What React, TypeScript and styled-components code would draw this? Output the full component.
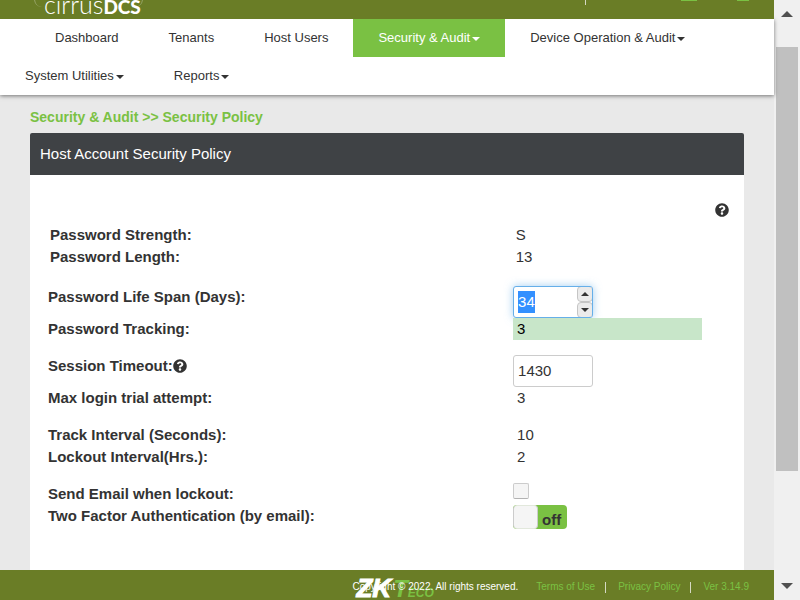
import React, { useEffect, useRef, useState } from "react";
import styled, { createGlobalStyle, css } from "styled-components";
import { FaQuestionCircle } from "react-icons/fa";

const colors = {
  olive: "#6a7d26",
  green: "#7ac143",
  ink: "#333333",
  slate: "#3f4245",
  page: "#e9e9e9",
  border: "#cccccc",
};

const GlobalStyle = createGlobalStyle`
  * { box-sizing: border-box; }
  body {
    margin: 0;
    overflow: hidden;
    background: ${colors.page};
    color: ${colors.ink};
    font-family: "Liberation Sans", Arial, sans-serif;
    font-size: 15px;
    line-height: 22px;
  }
  button, input { font: inherit; color: inherit; }
  ::selection { background: #3390ff; color: #ffffff; }
`;

const Shell = styled.div`
  display: grid;
  grid-template-columns: minmax(0, 1fr) 26px;
  height: 100vh;
`;

const Page = styled.div`
  display: flex;
  flex-direction: column;
  min-height: 0;
`;

const Banner = styled.header`
  position: relative;
  z-index: 1;
  display: flex;
  justify-content: space-between;
  align-items: flex-start;
  height: 19px;
  padding: 0 25px 0 34px;
  overflow: hidden;
  background: ${colors.olive};
`;

const Brand = styled.a`
  display: flex;
  align-self: flex-end;
  align-items: baseline;
  height: 32px;
  margin-bottom: 12px;
  padding: 0 1px 0 9px;
  border: solid rgba(255, 255, 255, 0.3);
  border-width: 0 1px;
  border-radius: 8px;
  color: #ffffff;
  font-family: Lato, sans-serif;
  font-size: 25px;
  font-weight: 300;
  line-height: 58px;
  text-decoration: none;

  strong {
    font-size: 19px;
    font-weight: 900;
  }
`;

const BannerTools = styled.div`
  display: flex;
  align-items: flex-start;
`;

const BannerRule = styled.span`
  width: 1px;
  height: 5px;
  margin-right: 95px;
  background: #d5d9c4;
`;

const BannerMark = styled.span<{ $wide?: boolean }>`
  width: ${(p) => (p.$wide ? 16 : 12)}px;
  height: 1px;
  margin-right: ${(p) => (p.$wide ? 40 : 0)}px;
  background: ${colors.green};
`;

const Nav = styled.nav`
  position: relative;
  background: #ffffff;
  box-shadow: 0 1px 4px rgba(0, 0, 0, 0.5);
`;

const NavList = styled.ul`
  display: flex;
  flex-wrap: wrap;
  margin: 0;
  padding: 0;
  list-style: none;

  li:first-child { margin-left: 30px; }
`;

const NavLink = styled.a<{ $active?: boolean }>`
  display: flex;
  align-items: center;
  gap: 2px;
  height: 38px;
  padding: 0 25px;
  color: ${(p) => (p.$active ? "#ffffff" : colors.ink)};
  background: ${(p) => (p.$active ? colors.green : "transparent")};
  font-size: 13px;
  text-decoration: none;
`;

const Caret = styled.span`
  margin-top: 2px;
  border: 4px solid transparent;
  border-top-color: currentColor;
  border-bottom: 0;
`;

const Content = styled.main`
  display: flex;
  flex: 1;
  flex-direction: column;
  min-height: 0;
  padding: 11px 30px 0;
  overflow: hidden;
`;

const Crumbs = styled.h1`
  margin: 0 0 5px;
  color: ${colors.green};
  font-size: 14px;
  line-height: 22px;
`;

const Card = styled.section`
  flex: 1;
  background: #ffffff;
  border-radius: 2px 2px 0 0;
`;

const CardTitle = styled.h2`
  margin: 0;
  padding: 10px;
  background: ${colors.slate};
  border-radius: 2px 2px 0 0;
  color: #ffffff;
  font-size: 15px;
  font-weight: 400;
  line-height: 22px;
`;

const CardTools = styled.div`
  display: flex;
  justify-content: flex-end;
  padding: 28px 15px 7px;
`;

const HelpButton = styled.button`
  display: inline-flex;
  padding: 0;
  border: 0;
  background: none;
  color: ${colors.ink};
  font-size: 14px;
`;

const PolicyForm = styled.form`
  display: flex;
  flex-direction: column;
  gap: 15px;
  padding: 0 42px 0 18px;
`;

const Group = styled.div<{ $lead?: boolean }>`
  ${(p) =>
    p.$lead &&
    css`
      padding-bottom: 3px;
    `}
`;

const Row = styled.div<{ $inset?: boolean }>`
  display: grid;
  grid-template-columns: 32fr 13fr;
  padding-left: ${(p) => (p.$inset ? 2 : 0)}px;
`;

const Label = styled.label`
  display: flex;
  align-items: center;
  height: 22px;
  font-weight: 700;
`;

const Value = styled.output<{ $highlight?: boolean; $flush?: boolean }>`
  padding-left: ${(p) => (p.$flush ? 2 : 4)}px;
  ${(p) =>
    p.$highlight &&
    css`
      background: #c8e6c9;
      color: #000000;
    `}
`;

const InputBox = styled.div<{ $glow?: boolean }>`
  display: flex;
  width: 80px;
  height: 32px;
  overflow: hidden;
  border: 1px solid ${(p) => (p.$glow ? "#66afe9" : colors.border)};
  border-radius: 3px;
  background: #ffffff;
  box-shadow: ${(p) => (p.$glow ? "0 0 8px rgba(102, 175, 233, 0.6)" : "none")};
`;

const NumberInput = styled.input`
  flex: 1;
  min-width: 0;
  padding: 0 0 0 4px;
  border: 0;
  outline: 0;
  background: transparent;
  appearance: textfield;

  &::-webkit-inner-spin-button { appearance: none; margin: 0; }
`;

const Spinner = styled.div`
  display: grid;
  grid-template-rows: 1fr 1fr;
  width: 16px;
  margin: -1px -1px -1px 0;
`;

const SpinButton = styled.button`
  display: flex;
  align-items: center;
  justify-content: center;
  padding: 0;
  border: 1px solid #c5c5c5;
  border-radius: 4px;
  background: #ebebeb;
`;

const CheckBox = styled.input`
  width: 16px;
  height: 16px;
  margin: 0;
  appearance: none;
  border: 1px solid ${colors.border};
  border-bottom-color: #b3b3b3;
  border-radius: 2px;
  background: #f5f5f5;

  &:checked { background: ${colors.green}; }
`;

const Toggle = styled.label`
  display: flex;
  width: 54px;
  height: 24px;
  overflow: hidden;
  border-radius: 4px;
  background: ${colors.green};
  font-weight: 700;
`;

const ToggleInput = styled.input`
  width: 25px;
  height: 24px;
  margin: 0 4px 0 0;
  appearance: none;
  border: 1px solid ${colors.border};
  border-color: #e2e8dc ${colors.border};
  border-radius: 4px;
  background: #f5f5f5;
`;

const ToggleText = styled.span`
  padding-top: 4px;
`;

const Footer = styled.footer`
  display: flex;
  align-items: center;
  justify-content: flex-end;
  height: 30px;
  padding: 4px 25px 0 0;
  background: ${colors.olive};
  color: #ffffff;
  font-size: 10px;
  line-height: 12px;
`;

const Copyright = styled.span`
  position: relative;
  margin-right: 18px;
`;

const CopyText = styled.span`
  position: relative;
`;

const ZkLogo = styled.span`
  position: absolute;
  top: -7px;
  left: 4px;
  display: flex;
  align-items: baseline;
  gap: 2px;
  color: ${colors.green};
  font-size: 17px;
  font-style: italic;
  font-weight: 700;
  line-height: 28px;

  b {
    color: #ffffff;
    font-size: 26px;
    -webkit-text-stroke: 1px #ffffff;
  }
`;

const LogoTail = styled.span`
  display: inline-block;
  font-variant: small-caps;

  &::first-letter { font-size: 24px; }
`;

const FooterLink = styled.a`
  color: ${colors.green};
  text-decoration: none;
`;

const FooterRule = styled.span`
  width: 1px;
  height: 11px;
  margin: 0 12px 0 10px;
  background: #d5d9c4;
`;

const ScrollBar = styled.aside`
  display: flex;
  flex-direction: column;
  background: #f0f0f0;
`;

const ScrollButton = styled.button`
  display: flex;
  align-items: center;
  justify-content: center;
  height: 28px;
  padding: 0;
  border: 0;
  background: none;
  color: #505050;
`;

const ScrollTrack = styled.div`
  display: grid;
  flex: 1;
  grid-template-rows: 19fr 424fr 101fr;
  padding: 0 2px;
`;

const ScrollThumb = styled.div`
  grid-row: 2;
  background: #c0c0c0;
`;

function Triangle({ down, size }: { down?: boolean; size: number }) {
  return (
    <svg width={size} height={size / 2} viewBox="0 0 12 6" aria-hidden="true">
      <path d={down ? "M0 0H12L6 6Z" : "M0 6H12L6 0Z"} fill="currentColor" />
    </svg>
  );
}

const navItems = [
  { label: "Dashboard" },
  { label: "Tenants" },
  { label: "Host Users" },
  { label: "Security & Audit", menu: true, active: true },
  { label: "Device Operation & Audit", menu: true },
  { label: "System Utilities", menu: true },
  { label: "Reports", menu: true },
];

export default function App() {
  const lifeSpanRef = useRef<HTMLInputElement>(null);
  const [lifeSpan, setLifeSpan] = useState(34);
  const [timeoutValue, setTimeoutValue] = useState("1430");
  const [twoFactor, setTwoFactor] = useState(false);

  useEffect(() => {
    lifeSpanRef.current?.focus();
    lifeSpanRef.current?.select();
  }, []);

  return (
    <Shell>
      <GlobalStyle />
      <Page>
        <Banner>
          <Brand href="#home">
            cirrus<strong>DCS</strong>
          </Brand>
          <BannerTools>
            <BannerRule />
            <BannerMark $wide />
            <BannerMark />
          </BannerTools>
        </Banner>
        <Nav>
          <NavList>
            {navItems.map((item) => (
              <li key={item.label}>
                <NavLink href="#nav" $active={item.active}>
                  {item.label}
                  {item.menu && <Caret />}
                </NavLink>
              </li>
            ))}
          </NavList>
        </Nav>
        <Content>
          <Crumbs>Security &amp; Audit &gt;&gt; Security Policy</Crumbs>
          <Card>
            <CardTitle>Host Account Security Policy</CardTitle>
            <CardTools>
              <HelpButton type="button" aria-label="Help">
                <FaQuestionCircle />
              </HelpButton>
            </CardTools>
            <PolicyForm>
              <Group $lead>
                <Row $inset>
                  <Label htmlFor="strength">Password Strength:</Label>
                  <Value id="strength" $flush>S</Value>
                </Row>
                <Row $inset>
                  <Label htmlFor="length">Password Length:</Label>
                  <Value id="length" $flush>13</Value>
                </Row>
              </Group>
              <Group>
                <Row>
                  <Label htmlFor="life">Password Life Span (Days):</Label>
                  <InputBox $glow>
                    <NumberInput
                      id="life"
                      ref={lifeSpanRef}
                      type="number"
                      value={lifeSpan}
                      onChange={(e) => setLifeSpan(Number(e.target.value))}
                    />
                    <Spinner>
                      <SpinButton type="button" aria-label="Increase" onClick={() => setLifeSpan(lifeSpan + 1)}>
                        <Triangle size={8} />
                      </SpinButton>
                      <SpinButton type="button" aria-label="Decrease" onClick={() => setLifeSpan(lifeSpan - 1)}>
                        <Triangle size={8} down />
                      </SpinButton>
                    </Spinner>
                  </InputBox>
                </Row>
                <Row>
                  <Label htmlFor="tracking">Password Tracking:</Label>
                  <Value id="tracking" $highlight>3</Value>
                </Row>
              </Group>
              <Group>
                <Row>
                  <Label htmlFor="timeout">
                    Session Timeout:
                    <HelpButton type="button" aria-label="Session timeout help">
                      <FaQuestionCircle />
                    </HelpButton>
                  </Label>
                  <InputBox>
                    <NumberInput
                      id="timeout"
                      type="text"
                      value={timeoutValue}
                      onChange={(e) => setTimeoutValue(e.target.value)}
                    />
                  </InputBox>
                </Row>
                <Row>
                  <Label htmlFor="attempts">Max login trial attempt:</Label>
                  <Value id="attempts">3</Value>
                </Row>
              </Group>
              <Group>
                <Row>
                  <Label htmlFor="interval">Track Interval (Seconds):</Label>
                  <Value id="interval">10</Value>
                </Row>
                <Row>
                  <Label htmlFor="lockout">Lockout Interval(Hrs.):</Label>
                  <Value id="lockout">2</Value>
                </Row>
              </Group>
              <Group>
                <Row>
                  <Label htmlFor="send-email">Send Email when lockout:</Label>
                  <CheckBox id="send-email" type="checkbox" />
                </Row>
                <Row>
                  <Label htmlFor="two-factor">Two Factor Authentication (by email):</Label>
                  <Toggle>
                    <ToggleInput
                      id="two-factor"
                      type="checkbox"
                      checked={twoFactor}
                      onChange={(e) => setTwoFactor(e.target.checked)}
                    />
                    <ToggleText>{twoFactor ? "on" : "off"}</ToggleText>
                  </Toggle>
                </Row>
              </Group>
            </PolicyForm>
          </Card>
        </Content>
        <Footer>
          <Copyright>
            <ZkLogo>
              <b>ZK</b>
              <LogoTail>Teco</LogoTail>
            </ZkLogo>
            <CopyText>Copyright © 2022. All rights reserved.</CopyText>
          </Copyright>
          <FooterLink href="#terms">Terms of Use</FooterLink>
          <FooterRule />
          <FooterLink href="#privacy">Privacy Policy</FooterLink>
          <FooterRule />
          <FooterLink href="#version">Ver 3.14.9</FooterLink>
        </Footer>
      </Page>
      <ScrollBar>
        <ScrollButton type="button" aria-label="Scroll up">
          <Triangle size={12} />
        </ScrollButton>
        <ScrollTrack>
          <ScrollThumb />
        </ScrollTrack>
        <ScrollButton type="button" aria-label="Scroll down">
          <Triangle size={12} down />
        </ScrollButton>
      </ScrollBar>
    </Shell>
  );
}
